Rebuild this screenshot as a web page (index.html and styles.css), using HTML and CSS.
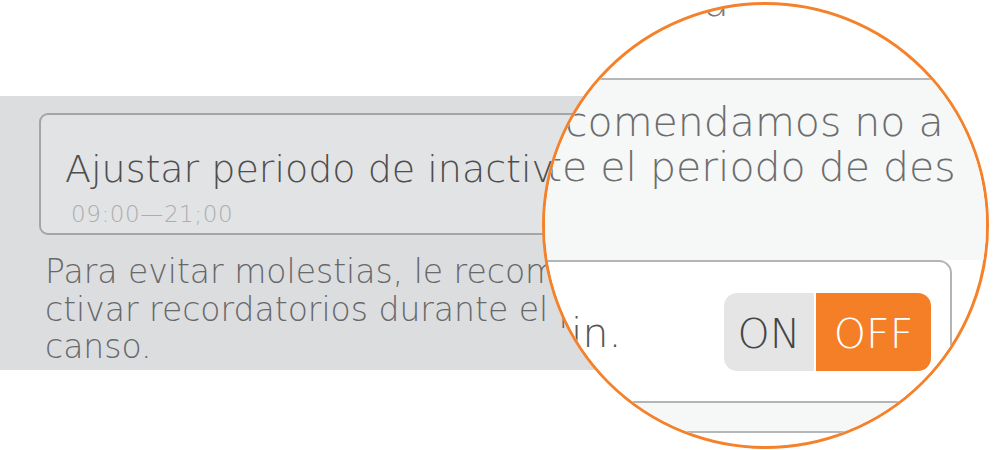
FILE: index.html
```html
<!DOCTYPE html>
<html lang="es">
<head>
<meta charset="utf-8">
<title>Periodo de inactividad</title>
<link rel="stylesheet" href="styles.css">
</head>
<body>
<div class="page">
  <div class="band">
    <div class="card">
      <div class="card-title">Ajustar periodo de inactividad</div>
      <div class="card-sub">09:00—21;00</div>
    </div>
    <p class="note">Para evitar molestias, le recomendamos no a<br>ctivar recordatorios durante el periodo de des<br>canso.</p>
  </div>

  <div class="magnifier">
    <div class="mag-top"><span class="mag-frag">ra</span></div>
    <div class="mag-sec">
      <div class="mag-line1">comendamos no a</div>
      <div class="mag-line2">te el periodo de des</div>
    </div>
    <div class="mag-card">
      <span class="mag-label">in.</span>
      <div class="toggle">
        <span class="seg seg-on">ON</span>
        <span class="seg seg-off">OFF</span>
      </div>
    </div>
    <div class="mag-foot"></div>
  </div>
</div>
</body>
</html>
```

FILE: styles.css
```css
html, body {
  margin: 0;
  padding: 0;
  background: #ffffff;
}

body {
  width: 994px;
  height: 450px;
  overflow: hidden;
  font-family: "DejaVu Sans", "Liberation Sans", sans-serif;
  font-weight: 200;
}

.page {
  position: relative;
  width: 994px;
  height: 450px;
  padding-top: 96px;
  box-sizing: border-box;
}

.band {
  width: 720px;
  height: 274px;
  background: #dcdddf;
  padding: 17px 0 0 39px;
  box-sizing: border-box;
}

.card {
  width: 660px;
  height: 122px;
  box-sizing: border-box;
  border: 2px solid #a4a5a7;
  border-radius: 9px;
  background: #e2e3e5;
  padding: 32px 0 0 24px;
}

.card-title {
  font-size: 38px;
  line-height: 44px;
  color: #4e4e4e;
  white-space: nowrap;
}

.card-sub {
  font-size: 23px;
  line-height: 26px;
  letter-spacing: 0.6px;
  color: #acadaf;
  margin: 10px 0 0 6px;
  white-space: nowrap;
}

.note {
  margin: 18px 0 0 6px;
  font-size: 33px;
  line-height: 37.5px;
  color: #67686a;
  white-space: nowrap;
}

/* magnifier overlay */
.magnifier {
  position: absolute;
  left: 542px;
  top: 2px;
  width: 447px;
  height: 447px;
  box-sizing: border-box;
  border: 3px solid #f5822a;
  border-radius: 50%;
  background: #ffffff;
  overflow: hidden;
}

.mag-top {
  height: 73px;
  overflow: hidden;
  padding-left: 142px;
  box-sizing: border-box;
}

.mag-frag {
  display: block;
  margin-top: -23px;
  font-size: 41px;
  line-height: 41px;
  color: #777879;
}

.mag-sec {
  height: 182px;
  box-sizing: border-box;
  border-top: 2px solid #b6b7b8;
  background: #f6f7f7;
  padding-top: 20px;
  font-size: 41px;
  line-height: 45px;
  color: #6c6d6e;
  white-space: nowrap;
}

.mag-line1 {
  padding-left: 20px;
}

.mag-line2 {
  padding-left: 1px;
}

.mag-card {
  margin-left: -20px;
  width: 427px;
  height: 143px;
  box-sizing: border-box;
  border: 2px solid #b3b4b5;
  border-radius: 0 13px 13px 0;
  background: #ffffff;
  display: flex;
  align-items: center;
  justify-content: space-between;
  padding: 0 19px 0 44px;
}

.mag-label {
  font-size: 41px;
  line-height: 41px;
  color: #555657;
  padding-top: 4px;
}

.toggle {
  display: flex;
  gap: 2px;
  height: 78px;
}

.seg {
  display: flex;
  align-items: center;
  justify-content: center;
  height: 78px;
  box-sizing: border-box;
  padding-top: 6px;
  font-size: 41px;
  line-height: 41px;
}

.seg-on {
  width: 90px;
  background: #e5e5e6;
  color: #444546;
  border-radius: 13px 0 0 13px;
}

.seg-off {
  width: 115px;
  background: #f47f27;
  color: #ffffff;
  border-radius: 0 13px 13px 0;
}

.mag-foot {
  height: 30px;
  box-sizing: border-box;
  background: #f6f7f7;
  border-bottom: 2px solid #b6b7b8;
}
```
